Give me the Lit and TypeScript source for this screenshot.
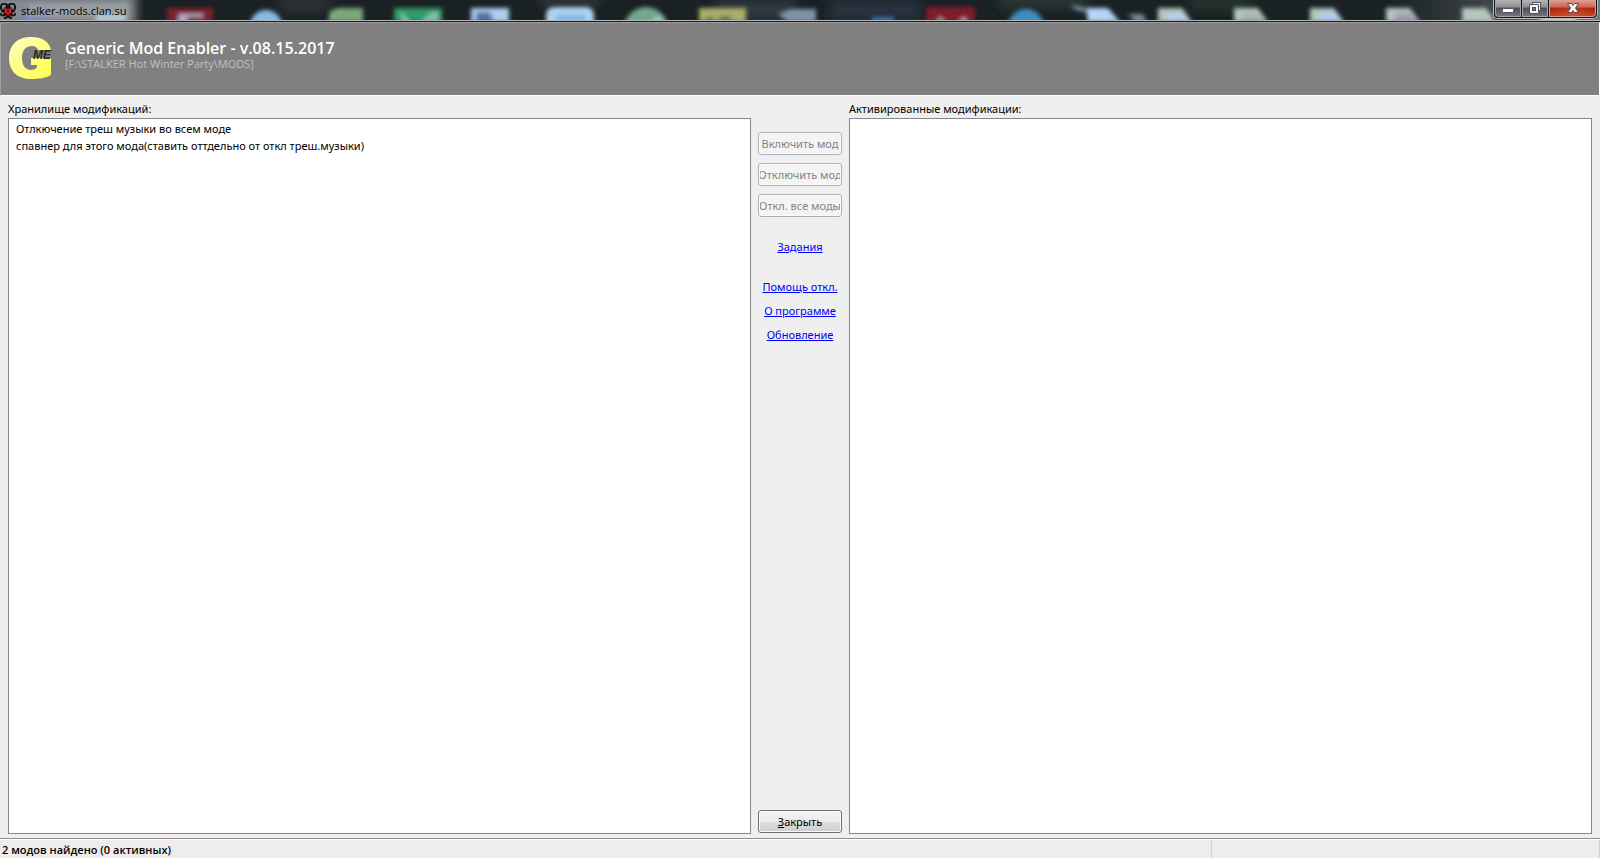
import { LitElement, html, svg, css } from "lit";
import { customElement, state } from "lit/decorators.js";

@customElement("title-bar")
class TitleBar extends LitElement {
  static styles = css`
    :host {
      display: block;
      position: relative;
      height: 20px;
      background: #1a2124;
      overflow: hidden;
    }
    .backdrop {
      position: absolute;
      inset: 0;
      width: 100%;
      height: 100%;
    }
    .bar {
      position: relative;
      display: flex;
      align-items: flex-start;
      height: 20px;
    }
    .emblem {
      width: 16px;
      height: 16px;
      margin-top: 3px;
      flex: none;
    }
    .name {
      flex: 1;
      margin-left: 5px;
      font: 11px/22px "Open Sans", "Noto Sans", sans-serif;
      color: #000;
    }
    .controls {
      display: flex;
      height: 19px;
      margin-right: 2px;
      border: 1px solid #b9bcc0;
      border-top: 0;
      border-radius: 0 0 5px 5px;
      overflow: hidden;
      box-sizing: border-box;
      background: #15181b;
      padding: 0 1px 1px;
      gap: 1px;
    }
    button {
      display: grid;
      place-items: center;
      padding: 0;
      margin: 0;
      width: 26px;
      height: 17px;
      border: 1px solid #a4a5a9;
      border-top: 0;
      background: linear-gradient(#b5b5b6 0, #8c8c8f 45%, #4c4d58 50%, #74747e 100%);
    }
    .min {
      border-radius: 0 0 0 4px;
    }
    .close {
      width: 47px;
      border-color: #d79a8e;
      border-radius: 0 0 4px 0;
      background: radial-gradient(ellipse at 50% 100%, #e0603c66, transparent 70%),
        linear-gradient(#dda095 0, #c96450 45%, #ae220b 50%, #c04522 100%);
    }
    button svg {
      display: block;
    }
  `;

  render() {
    const page = (x: number, c: string) => svg`
      <path d="M${x} 8h24l10 14h-34z" fill="#b2c6bd" />
      <path d="M${x + 9} 13h15l9 9h-24z" fill=${c} />`;
    return html`
      <svg class="backdrop" viewBox="0 0 1600 20" preserveAspectRatio="none" aria-hidden="true">
        <defs>
          <filter id="soft" x="-5%" y="-50%" width="110%" height="200%">
            <feGaussianBlur stdDeviation="2" />
          </filter>
          <filter id="haze" x="-20%" y="-80%" width="140%" height="260%">
            <feGaussianBlur stdDeviation="5" />
          </filter>
          <linearGradient id="edge" x1="0" x2="1">
            <stop offset="0" stop-color="#5f666b" stop-opacity="0" />
            <stop offset="1" stop-color="#747a80" />
          </linearGradient>
        </defs>
        <g filter="url(#haze)">
          <rect x="-20" y="-6" width="156" height="32" fill="#858b90" />
          <rect x="280" y="-4" width="50" height="16" fill="#2a3231" />
          <rect x="540" y="-4" width="60" height="9" fill="#30383a" />
          <rect x="715" y="0" width="80" height="20" fill="#2d3840" />
          <rect x="830" y="0" width="90" height="20" fill="#27303c" />
          <rect x="1000" y="-4" width="90" height="12" fill="#2b3836" />
          <rect x="1190" y="-4" width="60" height="14" fill="#25322e" />
        </g>
        <rect x="1390" width="210" height="20" fill="url(#edge)" />
        <g filter="url(#soft)">
          <rect x="22" y="15" width="26" height="8" fill="#7a85bd" />
          <rect x="28" y="4" width="100" height="13" fill="#9a9fa2" />
          <rect x="96" y="14" width="30" height="8" fill="#b5c8d2" />
          <rect x="167" y="8" width="46" height="14" fill="#7c202b" />
          <path d="M179 14h24v3h-16v6h-9z" fill="#b9abc7" />
          <circle cx="266" cy="26" r="16" fill="#86b9e5" />
          <path d="M330 11l8-3h25v14h-35z" fill="#7aa878" />
          <rect x="394" y="8" width="48" height="14" fill="#2e9c68" />
          <path d="M400 11l7 7 3 6h-7zM420 22l12-10h6v10z" fill="#83c2ab" />
          <rect x="471" y="8" width="38" height="14" fill="#b0cdf3" />
          <path d="M476 12h14l4 10h-18z" fill="#5373ad" />
          <rect x="546" y="7" width="48" height="22" rx="8" fill="#b0d2ef" />
          <rect x="556" y="14" width="30" height="12" rx="3" fill="#84bceb" />
          <circle cx="646" cy="29" r="22" fill="#72a98b" />
          <path d="M652 22l5-6 9 6z" fill="#add0cd" />
          <rect x="699" y="8" width="47" height="14" fill="#aaae68" />
          <path d="M706 17h8v5h-8zM719 16h12v6h-12z" fill="#697957" />
          <path d="M778 14l12-5h26v13h-28z" fill="#7f93a8" />
          <rect x="872" y="17" width="22" height="6" fill="#3972b6" />
          <rect x="926" y="7" width="49" height="16" fill="#7d1d29" />
          <path d="M936 20l5-3 4 5zM958 20l8-3v6z" fill="#c3a5b3" />
          <circle cx="1026" cy="27" r="18" fill="#3e8dbf" />
          <path d="M1071 5l14 3v4l-10-3z" fill="#8da2b8" />
          <path d="M1086 8h22l12 14h-32z" fill="#b5d4f8" />
          <path d="M1128 14h15l4 8h-12z" fill="#76869a" />
          ${page(1158, "#b7d0e8")} ${page(1234, "#a4b5ac")} ${page(1310, "#b0cef1")}
          ${page(1386, "#a79ab4")} ${page(1462, "#b5c7b7")}
          <rect x="1540" y="16" width="36" height="6" fill="#b8ddff" />
        </g>
      </svg>
      <div class="bar">
        <svg class="emblem" viewBox="0 0 16 16" aria-hidden="true">
          <path d="M2 1C0 4 1 8 4 9M14 1c2 3 1 7-2 8M2 1c3-1 5 0 6 3 1-3 3-4 6-3M0 10c1 3 4 3 6 1M16 10c-1 3-4 3-6 1M4 15c2 0 4-1 4-4 0 3 2 4 4 4" fill="none" stroke="#121212" stroke-width="2" />
          <circle cx="8" cy="8" r="5" fill="#121212" />
          <path d="M4 4l3 2h2l3-2-1 4 1 2-2 0-2 3-2-3-2 0 1-2z" fill="#e6161d" />
          <circle cx="8" cy="8" r="1" fill="#210000" />
        </svg>
        <span class="name">stalker-mods.clan.su</span>
        <div class="controls">
          <button class="min" aria-label="Свернуть">
            <svg width="12" height="14" viewBox="0 0 12 14"><rect x=".5" y="7.500" width="11" height="4" rx="1" fill="#fff" stroke="#50515c" /></svg>
          </button>
          <button class="max" aria-label="Восстановить">
            <svg width="12" height="14" viewBox="0 0 12 14">
              <path d="M3.500 1.500h8v8h-2v3h-9v-9h3z" fill="#f5f5f5" stroke="#50515c" />
              <path d="M3 3.500h6.500v6" fill="none" stroke="#50515c" />
              <rect x="3.500" y="6.500" width="3" height="3" fill="#70717b" stroke="#50515c" />
            </svg>
          </button>
          <button class="close" aria-label="Закрыть окно">
            <svg width="12" height="14" viewBox="0 0 12 14">
              <path d="M.5 2.500h4L6 4.500l1.500-2h4L8.500 7l3 4.500h-4L6 9.500l-1.500 2h-4l3-4.500z" fill="#f7f7f7" stroke="#5b4a55" />
            </svg>
          </button>
        </div>
      </div>
    `;
  }
}

@customElement("app-root")
class AppRoot extends LitElement {
  @state() private mods = [
    "Отлкючение треш музыки во всем моде",
    "спавнер для этого мода(ставить оттдельно от откл треш.музыки)",
  ];
  @state() private active: string[] = [];

  static styles = css`
    :host {
      display: flex;
      flex-direction: column;
      height: 100vh;
      overflow: hidden;
      background: #efefef;
      color: #000;
      font: 11px/16px "Noto Sans", "Open Sans", sans-serif;
    }
    .header {
      display: flex;
      gap: 13px;
      height: 72px;
      flex: none;
      padding-left: 8px;
      background: #808080;
      border-top: 1px solid #a0a0a0;
      border-left: 1px solid #a0a0a0;
      border-right: 1px solid #fff;
      border-bottom: 1px solid #fff;
    }
    .seam {
      height: 2px;
      flex: none;
      background: linear-gradient(#b6b9bc 50%, #17181a 50%);
    }
    .logo {
      width: 43px;
      height: 43px;
      margin-top: 14px;
      overflow: visible;
    }
    .logo-text {
      font: italic bold 12px "Liberation Sans", sans-serif;
    }
    h1 {
      margin: 16px 0 0;
      font-family: "Open Sans", "Noto Sans", sans-serif;
      font-size: 16px;
      line-height: 18px;
      font-weight: 600;
      color: #fff;
    }
    .path {
      margin: 0;
      font-family: "Open Sans", "Noto Sans", sans-serif;
      line-height: 14px;
      color: #c0c0c0;
    }
    main {
      flex: 1;
      min-height: 0;
      display: grid;
      grid-template-columns: minmax(0, 1fr) 84px minmax(0, 1fr);
      gap: 7px;
      padding: 5px 8px 4px;
    }
    .pane {
      display: flex;
      flex-direction: column;
      gap: 1px;
    }
    .list {
      flex: 1;
      min-height: 0;
      width: 100%;
      box-sizing: border-box;
      margin: 0;
      padding: 2px 0;
      border: 1px solid #828790;
      border-radius: 0;
      outline: 0;
      background: #fff;
      color: #000;
      font: inherit;
      overflow: hidden;
    }
    .list option {
      padding: 0 7px;
      min-height: 17px;
      line-height: 17px;
    }
    .actions {
      display: flex;
      flex-direction: column;
      align-items: center;
      padding: 31px 0 1px;
    }
    .btn {
      width: 100%;
      height: 23px;
      flex: none;
      box-sizing: border-box;
      margin: 0 0 8px;
      padding: 0 1px;
      display: flex;
      justify-content: center;
      align-items: center;
      border: 1px solid #707070;
      border-radius: 3px;
      background: linear-gradient(#f2f2f2 0, #ebebeb 50%, #dddddd 50%, #cfcfcf 100%);
      box-shadow: inset 0 0 0 1px #fafafa;
      font: inherit;
      color: #000;
    }
    .caption {
      display: flex;
      justify-content: center;
      width: 100%;
      overflow: hidden;
      white-space: nowrap;
    }
    .btn:disabled {
      border-color: #adb2b5;
      background: #f4f4f4;
      color: #838383;
    }
    .btn.last {
      margin: auto 0 0;
    }
    a {
      color: #0000ff;
      text-decoration: underline;
      margin-bottom: 8px;
    }
    .tasks {
      margin: 14px 0 24px;
    }
    .status {
      display: grid;
      grid-template-columns: minmax(0, 1211fr) minmax(0, 388fr);
      height: 20px;
      box-sizing: border-box;
      flex: none;
      background: #f0eceb;
      border-top: 1px solid #8f8f8f;
      box-shadow: inset 0 1px #fff;
      font-family: "Open Sans", "Noto Sans", sans-serif;
      font-weight: 600;
      line-height: 20px;
    }
    .cell {
      margin-top: 1px;
      padding-left: 2px;
      border-right: 1px solid #d5d1cf;
      white-space: nowrap;
    }
  `;

  render() {
    return html`
      <title-bar></title-bar>
      <div class="seam"></div>
      <header class="header">
        <svg class="logo" viewBox="0 0 43 43" aria-hidden="true">
          <defs>
            <linearGradient id="gold" x1="0" y1="0" x2="1" y2="1">
              <stop offset="0" stop-color="#ffffc8" />
              <stop offset=".5" stop-color="#ffff84" />
              <stop offset="1" stop-color="#ffff50" />
            </linearGradient>
          </defs>
          <path d="M22 0c11 0 18 4 20 13H29c-1-3-3-4-6-4-7 0-10 5-10 12s3 12 9 12c3 0 5-1 6-3v-2h-6v-7h20v17c-5 3-12 4-20 4C8 42 0 34 0 21S8 0 22 0z" fill="url(#gold)" />
          <text class="logo-text" x="24" y="22" fill="#2b2b20">ME</text>
        </svg>
        <div>
          <h1>Generic Mod Enabler - v.08.15.2017</h1>
          <p class="path">[F:\\STALKER Hot Winter Party\\MODS]</p>
        </div>
      </header>
      <main>
        <section class="pane">
          <label for="store">Хранилище модификаций:</label>
          <select class="list" id="store" size="10">
            ${this.mods.map((m) => html`<option>${m}</option>`)}
          </select>
        </section>
        <nav class="actions">
          <button class="btn" disabled><span class="caption">Включить мод</span></button>
          <button class="btn" disabled><span class="caption">Отключить мод</span></button>
          <button class="btn" disabled><span class="caption">Откл. все моды</span></button>
          <a class="tasks" href="#tasks">Задания</a>
          <a href="#help">Помощь откл.</a>
          <a href="#about">О программе</a>
          <a href="#update">Обновление</a>
          <button class="btn last"><span class="caption"><u>З</u>акрыть</span></button>
        </nav>
        <section class="pane">
          <label for="active">Активированные модификации:</label>
          <select class="list" id="active" size="10">
            ${this.active.map((m) => html`<option>${m}</option>`)}
          </select>
        </section>
      </main>
      <footer class="status">
        <div class="cell">${this.mods.length} модов найдено (${this.active.length} активных)</div>
        <div class="cell"></div>
      </footer>
    `;
  }
}
